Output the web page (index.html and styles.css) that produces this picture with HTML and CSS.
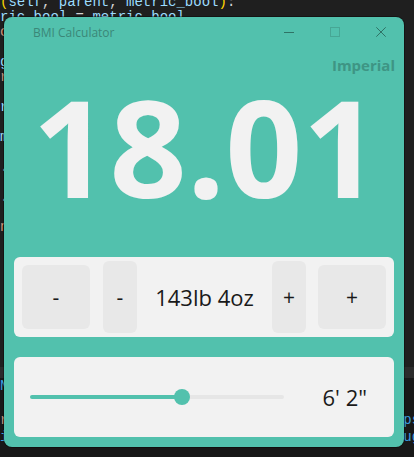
FILE: index.html
```html
<!DOCTYPE html>
<html lang="en">
<head>
<meta charset="utf-8">
<title>BMI Calculator</title>
<link rel="stylesheet" href="styles.css">
</head>
<body>
<div class="desktop">
  <div class="editor">
<pre class="code"><span class="y">(</span><span class="b">self</span>, <span class="b">parent</span>, <span class="b">metric_bool</span><span class="y">)</span>:
<span class="b">ric_bool</span> = <span class="b">metric_bool</span>
<span class="o">c</span>

<span class="b">g</span>
<span class="o">r</span>

<span class="b">r</span>

<span class="b">m</span>

<span class="w">.</span>

<span class="w">.</span>

<span class="o">n</span></pre>
  </div>
  <div class="panel-tabs"></div>
  <div class="terminal">
<pre class="term"><span class="t">N</span>
&nbsp;
<span class="o">r</span>                                               <span class="t">ps</span>
<span class="t">i</span>                                               <span class="t">ug</span></pre>
  </div>

  <div class="window">
    <div class="titlebar">
      <span class="title">BMI Calculator</span>
      <div class="controls">
        <span class="cap-btn">
          <svg width="10" height="10" viewBox="0 0 10 10"><path d="M0 5.5H10" stroke="#2f7366" stroke-width="1"/></svg>
        </span>
        <span class="cap-btn">
          <svg width="10" height="10" viewBox="0 0 10 10"><rect x="0.5" y="0.5" width="9" height="9" fill="none" stroke="#47a795" stroke-width="1"/></svg>
        </span>
        <span class="cap-btn">
          <svg width="10" height="10" viewBox="0 0 10 10"><path d="M0.3 0.3L9.7 9.7M9.7 0.3L0.3 9.7" stroke="#2f7366" stroke-width="1"/></svg>
        </span>
      </div>
    </div>
    <div class="content">
      <div class="units">Imperial</div>
      <div class="bmi">18.01</div>
      <div class="card weight">
        <div class="btn btn-lg">-</div>
        <div class="btn btn-sm btn-sm-left">-</div>
        <div class="weight-value">143lb 4oz</div>
        <div class="btn btn-sm">+</div>
        <div class="btn btn-lg btn-lg-right">+</div>
      </div>
      <div class="card height">
        <div class="slider">
          <div class="thumb"></div>
        </div>
        <div class="height-value">6' 2"</div>
      </div>
    </div>
  </div>
</div>
</body>
</html>
```

FILE: styles.css
```css
html, body {
  margin: 0;
  padding: 0;
}

body {
  width: 414px;
  height: 457px;
  overflow: hidden;
  background: #1e1e1e;
}

.desktop {
  position: relative;
  width: 414px;
  height: 457px;
  display: flex;
  flex-direction: column;
}

.editor {
  height: 367px;
  background: #1f1f1f;
  overflow: hidden;
}

.code {
  margin: -5px 0 0 0;
  font: 14px/15px "Liberation Mono", monospace;
  color: #d4d4d4;
  white-space: pre;
}

.panel-tabs {
  height: 11px;
  background: #2b2b2b;
}

.terminal {
  flex: 1;
  background: #181818;
  overflow: hidden;
}

.term {
  margin: 0;
  font: 14px/17px "Liberation Mono", monospace;
  color: #cccccc;
  white-space: pre;
}

.y { color: #ffd700; }
.b { color: #9cdcfe; }
.o { color: #ce9178; }
.w { color: #d4d4d4; }
.t { color: #3b9ee0; }

.window {
  position: absolute;
  left: 4px;
  top: 17px;
  width: 400px;
  height: 430px;
  background: #52c1ad;
  border-radius: 8px;
  box-shadow: 0 0 0 1px rgba(0, 0, 0, 0.35);
  display: flex;
  flex-direction: column;
  font-family: "Open Sans", "Noto Sans", sans-serif;
}

.titlebar {
  height: 30px;
  display: flex;
  align-items: center;
  padding-left: 29px;
}

.title {
  font-size: 12px;
  color: #3b8778;
  flex: 1;
}

.controls {
  display: flex;
  height: 30px;
}

.cap-btn {
  width: 46px;
  height: 30px;
  display: flex;
  align-items: center;
  justify-content: center;
}

.cap-btn svg {
  display: block;
}

.content {
  padding: 0 10px 10px 10px;
  display: flex;
  flex-direction: column;
}

.units {
  margin-top: 8px;
  margin-right: -1px;
  text-align: right;
  font-size: 15px;
  line-height: 20px;
  font-weight: 700;
  color: #3e9584;
}

.bmi {
  margin-top: 4px;
  margin-bottom: 44px;
  text-align: center;
  font-size: 135px;
  line-height: 134px;
  height: 134px;
  font-weight: 700;
  color: #f2f2f2;
  padding-left: 4px;
}

.card {
  box-sizing: border-box;
  height: 80px;
  background: #f2f2f2;
  border-radius: 6px;
  display: flex;
  align-items: center;
}

.weight {
  padding: 0 8px;
}

.btn {
  flex: none;
  background: #e8e8e8;
  border-radius: 6px;
  display: flex;
  align-items: center;
  justify-content: center;
  font-size: 21px;
  color: #1a1a1a;
}

.btn-lg {
  width: 68px;
  height: 64px;
}

.btn-sm {
  width: 34px;
  height: 72px;
}

.btn-sm-left {
  margin-left: 13px;
}

.btn-lg-right {
  margin-left: 12px;
}

.weight-value {
  flex: 1;
  text-align: center;
  font-size: 22px;
  color: #1a1a1a;
}

.height {
  margin-top: 20px;
  padding-left: 16px;
}

.slider {
  position: relative;
  width: 254px;
  height: 4px;
  border-radius: 2px;
  background: linear-gradient(to right, #52c1ad 0, #52c1ad 152px, #e6e6e6 152px, #e6e6e6 100%);
}

.thumb {
  position: absolute;
  left: 144px;
  top: -6px;
  width: 16px;
  height: 16px;
  border-radius: 50%;
  background: #52c1ad;
}

.height-value {
  margin-left: auto;
  padding-right: 27px;
  font-size: 22px;
  color: #1a1a1a;
}
```
